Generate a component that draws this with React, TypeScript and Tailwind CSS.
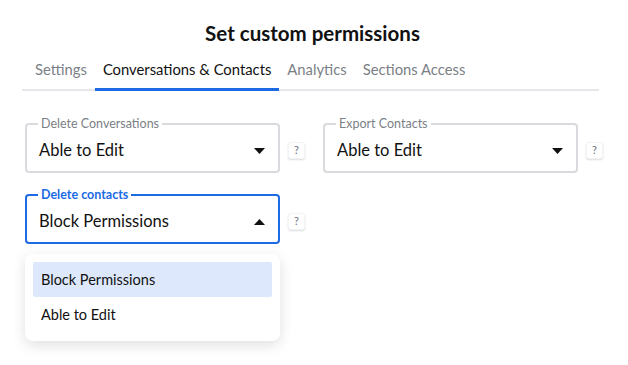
import { useState } from 'react'

const tabs = ['Settings', 'Conversations & Contacts', 'Analytics', 'Sections Access']

function Caret({ up }: { up?: boolean }) {
  return (
    <svg width="11" height="6" viewBox="0 0 11 6" className={up ? 'rotate-180' : ''}>
      <path d="M0 0 L11 0 L5.5 6 Z" fill="#111111" />
    </svg>
  )
}

function Help() {
  return (
    <div className="w-[17px] h-[17px] mt-[26px] rounded-[3px] border border-gray-100 shadow-[0_1px_2px_rgba(0,0,0,0.14)] flex items-center justify-center text-[11px] text-gray-500 bg-white">
      ?
    </div>
  )
}

function Select({ label, value, open }: { label: string; value: string; open?: boolean }) {
  return (
    <div className="flex gap-[8px]">
      <fieldset
        className={`w-[255px] h-[57px] rounded-[4px] border-2 pl-[12px] pr-[12px] ${
          open ? 'border-[#1c6ae4]' : 'border-[#d9dadd]'
        }`}
      >
        <legend
          className={`px-[3px] ml-[-1px] text-[12.5px] leading-4 ${
            open ? 'text-[#1c6ae4] font-bold' : 'text-[#7b7f86]'
          }`}
        >
          {label}
        </legend>
        <div className="flex items-center justify-between h-[39px] pb-[2px]">
          <span className="text-[16.5px] text-[#111111]">{value}</span>
          <span className="mr-[1px]">
            <Caret up={open} />
          </span>
        </div>
      </fieldset>
      <Help />
    </div>
  )
}

export default function App() {
  const [active] = useState(1)

  return (
    <div className="w-[628px] h-[365px] bg-white font-['Lato',sans-serif] text-[#111111]">
      <div className="ml-[22px] w-[577px] pt-[19px]">
        <h1 className="text-center text-[20.5px] font-bold leading-[28px] pl-[4px]">Set custom permissions</h1>
        <div className="mt-[8px] flex px-[5px] border-b-2 border-[#e5e7eb] h-[36px]">
          {tabs.map((t, i) => (
            <div
              key={t}
              className={`px-[8px] text-[14.8px] pt-[3px] border-b-[3px] -mb-[2px] ${
                i === active ? 'border-[#1c6ae4] text-[#111111]' : 'border-transparent text-[#7b7f86]'
              }`}
            >
              {t}
            </div>
          ))}
        </div>
        <div className="mt-[25px] pl-[3px] flex gap-[18px]">
          <Select label="Delete Conversations" value="Able to Edit" />
          <Select label="Export Contacts" value="Able to Edit" />
        </div>
        <div className="mt-[14px] pl-[3px] relative">
          <Select label="Delete contacts" value="Block Permissions" open />
          <div className="absolute left-[3px] top-[67px] w-[255px] bg-white rounded-[8px] shadow-[0_4px_14px_rgba(0,0,0,0.13)] p-[8px]">
            <div className="h-[35px] rounded-[2px] bg-[#dde8fc] flex items-center px-[8px] text-[14.5px]">
              Block Permissions
            </div>
            <div className="h-[36px] flex items-center px-[8px] text-[14.5px]">Able to Edit</div>
          </div>
        </div>
      </div>
    </div>
  )
}
